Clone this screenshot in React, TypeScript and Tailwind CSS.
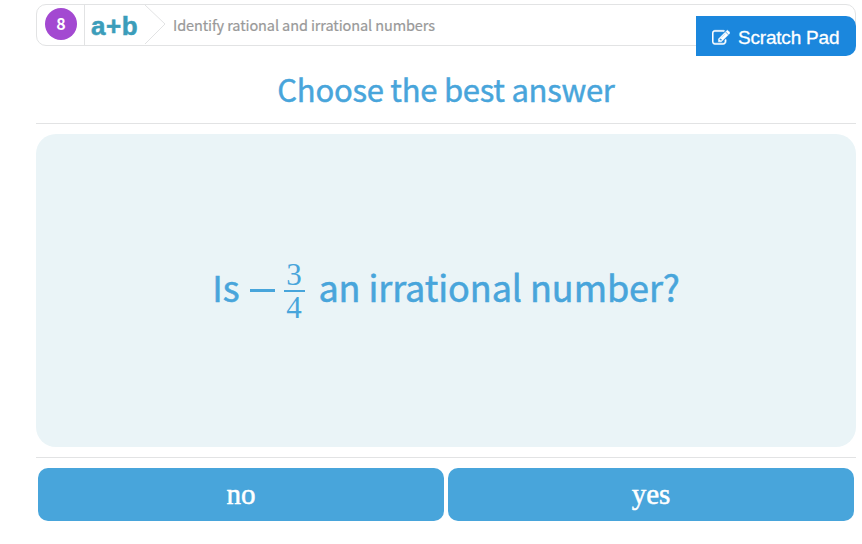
const sans = "font-['Noto_Sans_CJK_SC','Noto_Sans',sans-serif]";
const serif = "font-['Liberation_Serif',serif]";

function EditIcon() {
  return (
    <svg className="mt-[3px] h-[18px] w-[18px]" viewBox="0 0 1792 1792" fill="currentColor" stroke="currentColor" strokeWidth="50">
      <path d="M888 1184l116-116-152-152-116 116v56h96v96h56zm440-720q-16-16-33 1l-350 350q-17 17-1 33t33-1l350-350q17-17 1-33zm80 594v190q0 119-84.5 203.5t-203.5 84.5h-832q-119 0-203.5-84.5t-84.5-203.5v-832q0-119 84.5-203.5t203.5-84.5h832q63 0 117 25 15 7 18 23 3 17-9 29l-49 49q-14 14-32 8-23-6-45-6h-832q-66 0-113 47t-47 113v832q0 66 47 113t113 47h832q66 0 113-47t47-113v-126q0-13 9-22l64-64q15-15 35-7t20 29zm-96-738l288 288-672 672h-288v-288zm444 132l-92 92-288-288 92-92q28-28 68-28t68 28l152 152q28 28 28 68t-28 68z" />
    </svg>
  );
}

function SkillBar() {
  return (
    <header className="relative flex h-[42px] items-center rounded-[10px] border border-[#e2e3e4]">
      <div className="flex h-full w-12 items-center border-r border-[#e2e3e4] pl-2">
        <span className={`${sans} -mt-0.5 flex size-8 items-center justify-center rounded-full bg-[#a349d1] text-[16px] leading-none font-bold text-white`}>
          <span className="-mt-0.5">8</span>
        </span>
      </div>
      <span className="mt-0.5 ml-[6px] w-[48px] font-['Liberation_Sans',sans-serif] text-[26px] leading-10 font-bold tracking-[0.6px] text-[#3b9dba] [-webkit-text-stroke:0.5px_#3b9dba]">
        a+b
      </span>
      <svg className="ml-1.5 h-10 w-6" viewBox="0 0 24 40" fill="none" stroke="#e2e3e4">
        <path d="M0 0L20 19L0 39" />
      </svg>
      <span className={`${sans} ml-1 text-[14.5px] leading-10 tracking-[-0.1px] whitespace-nowrap text-[#999] [-webkit-text-stroke:0.2px_#999]`}>
        Identify rational and irrational numbers
      </span>
      <button className="absolute -right-px top-[11px] flex h-10 w-40 items-center rounded-r-[10px] bg-[#1b87dd] pl-4 font-['Liberation_Sans',sans-serif] text-[19px] tracking-[-0.2px] text-white [-webkit-text-stroke:0.3px_white]">
        <EditIcon />
        <span className="mt-1 ml-2 whitespace-nowrap">Scratch Pad</span>
      </button>
    </header>
  );
}

function Fraction() {
  return (
    <span className={`${serif} mr-[13px] ml-[9px] flex w-[21px] flex-col items-center text-[31px] [-webkit-text-stroke:0px]`}>
      <span className="-ml-0.5 h-[29px] leading-[28px]">3</span>
      <span className="h-0.5 w-full bg-[#48a5db]" />
      <span className="-ml-0.5 h-[29px] leading-[31px]">4</span>
    </span>
  );
}

export default function App() {
  return (
    <main className="h-[544px] w-[862px] overflow-hidden bg-white pt-1 pr-1.5 pl-9">
      <SkillBar />
      <h1 className={`${sans} flex h-[77px] items-center justify-center text-[31px] tracking-[-0.26px] whitespace-nowrap text-[#48a5db] [-webkit-text-stroke:0.45px_#48a5db]`}>
        <span className="mt-[7px] leading-none">Choose the best answer</span>
      </h1>
      <hr className="border-[#e2e3e4]" />
      <section className={`${sans} mt-2.5 flex h-[313px] items-center justify-center rounded-[20px] bg-[#eaf4f7] text-[36px] leading-none tracking-[-0.08px] whitespace-nowrap text-[#48a5db] [-webkit-text-stroke:0.55px_#48a5db]`}>
        <span className="-mt-[9px]">Is</span>
        <span className="ml-[11px] h-[3px] w-[25px] bg-[#48a5db]" />
        <Fraction />
        <span className="-mt-[9px]">an irrational number?</span>
      </section>
      <hr className="mt-2.5 border-[#e2e3e4]" />
      <div className="mt-2.5 grid grid-cols-2 gap-1 px-0.5">
        {["no", "yes"].map((answer) => (
          <button
            key={answer}
            className={`${serif} h-[53px] rounded-[10px] bg-[#48a5db] text-[29px] leading-none text-white [-webkit-text-stroke:0.5px_white]`}
          >
            {answer}
          </button>
        ))}
      </div>
    </main>
  );
}
